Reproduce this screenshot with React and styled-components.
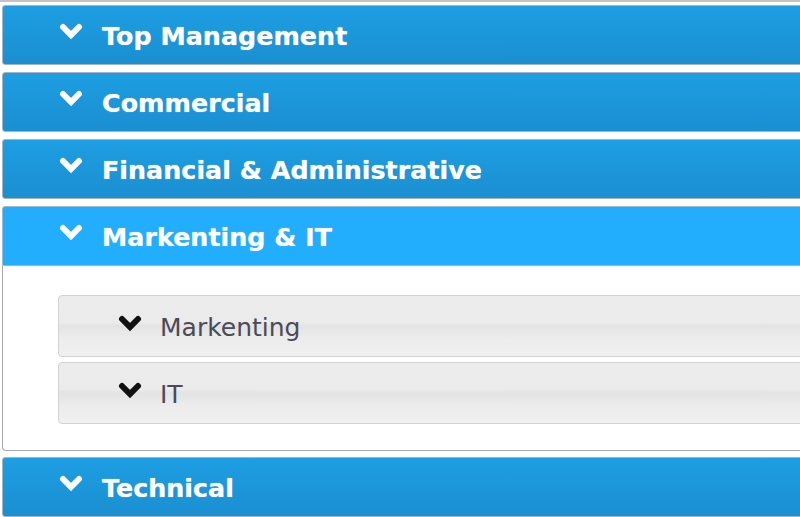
import React from "react";
import styled, { createGlobalStyle } from "styled-components";

const Global = createGlobalStyle`
  html, body { margin: 0; padding: 0; background: #ffffff; overflow: hidden; }
  body { font-family: "DejaVu Sans", Verdana, sans-serif; }
`;

const Accordion = styled.div`
  width: 900px;
  border-top: 2px solid #c4c4c4;
  padding: 3px 0 0 2px;
  display: flex;
  flex-direction: column;
`;

const Header = styled.div`
  box-sizing: border-box;
  height: 60px;
  margin-top: ${(p) => (p.$first ? "0" : p.$afterPanel ? "6px" : "7px")};
  border: 1px solid ${(p) => (p.$active ? "#9fb9cc" : "#a7b3bd")};
  border-radius: ${(p) => (p.$active ? "3px 3px 0 0" : "3px")};
  background: ${(p) =>
    p.$active ? "#22aefc" : "linear-gradient(#1e9ee3, #1a8fd1)"};
  display: flex;
  align-items: center;
  gap: 19px;
  padding: 2px 0 0 56px;
  color: #ffffff;
  font-family: "DejaVu Sans", Verdana, sans-serif;
  font-weight: bold;
  font-size: 25.4px;
  text-shadow: 0 0 1px rgba(255, 255, 255, 0.6);
`;

const Panel = styled.div`
  box-sizing: border-box;
  border: 1px solid #a9a9a9;
  border-top: none;
  border-radius: 0 0 4px 4px;
  background: #ffffff;
  padding: 29px 0 26px 55px;
  display: flex;
  flex-direction: column;
  gap: 5px;
`;

const Item = styled.div`
  box-sizing: border-box;
  height: 62px;
  border: 1px solid #d2d2d2;
  border-radius: 4px;
  background: linear-gradient(
    #ececec 0%,
    #ebebeb 44%,
    #e3e3e3 50%,
    #ececec 70%,
    #f0f0f0 100%
  );
  display: flex;
  align-items: center;
  gap: 18px;
  padding: 3px 0 0 59px;
  color: #4a4a58;
  font-family: "DejaVu Sans", Verdana, sans-serif;
  font-size: 25px;
`;

const Chevron = ({ color }) => (
  <svg width="24" height="17" viewBox="0 0 24 17" style={{ flex: "none" }}>
    <polyline
      points="4,4 12,12 20,4"
      fill="none"
      stroke={color}
      strokeWidth="6"
      strokeLinecap="round"
      strokeLinejoin="miter"
    />
  </svg>
);

const IconWrap = styled.span`
  display: flex;
  align-self: flex-start;
  margin-top: ${(p) => p.$top}px;
`;

const sections = [
  { title: "Top Management" },
  { title: "Commercial" },
  { title: "Financial & Administrative" },
  { title: "Markenting & IT", active: true, items: ["Markenting", "IT"] },
  { title: "Technical" },
];

export default function App() {
  return (
    <>
      <Global />
      <Accordion>
        {sections.map((s, i) => (
          <React.Fragment key={s.title}>
            <Header
              $first={i === 0}
              $active={s.active}
              $afterPanel={i > 0 && sections[i - 1].active}
            >
              <IconWrap $top={15}>
                <Chevron color="#ffffff" />
              </IconWrap>
              <span>{s.title}</span>
            </Header>
            {s.active && (
              <Panel>
                {s.items.map((it) => (
                  <Item key={it}>
                    <IconWrap $top={16}>
                      <Chevron color="#111111" />
                    </IconWrap>
                    <span>{it}</span>
                  </Item>
                ))}
              </Panel>
            )}
          </React.Fragment>
        ))}
      </Accordion>
    </>
  );
}
